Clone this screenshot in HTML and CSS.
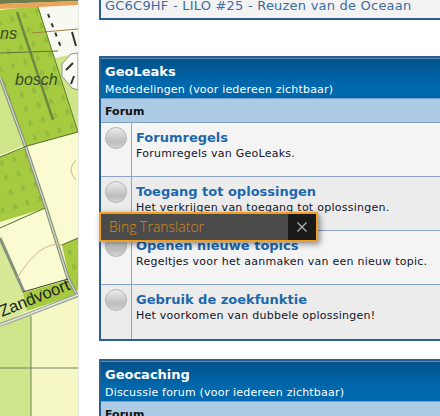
FILE: index.html
```html
<!DOCTYPE html>
<html lang="en">

<head>
    <meta charset="UTF-8">
    <title>GeoLeaks</title>
    <link rel="stylesheet" href="styles.css">
</head>

<body>
    <div class="page">
        <div class="map">
            <svg width="78" height="416" viewBox="0 0 78 416">
                <defs>
                    <pattern id="trees" width="13" height="15" patternUnits="userSpaceOnUse" patternTransform="rotate(-17)">
                        <rect width="13" height="15" fill="#a6cb41" />
                        <path d="M4 9 L6 4 L8 9 M6 4 V10" fill="none" stroke="#86ad38" stroke-width="0.8" />
                    </pattern>
                </defs>
                <rect width="78" height="416" fill="#f5f8c4" />
                <polygon points="0,238 24,292 27,311 0,325" fill="#d7e996" />
                <polygon points="0,325 31,314 31,416 0,416" fill="#cfe58c" />
                <polygon points="0,77 25,145 0,155" fill="#cfe58a" />
                <polygon points="55,58 78,53 78,132 70,134" fill="#cfe58a" />
                <polygon points="38,8 78,2 78,53 55,58" fill="#f8f9f0" />
                <polygon points="62,64 71,54 78,53 78,90 72,88 62,76" fill="#fbfbf4" stroke="#8b9484" />
                <polygon points="0,10 38,6 78,132 27,146 0,77" fill="url(#trees)" />
                <polygon points="0,157 27,147 46,208 0,222" fill="url(#trees)" />
                <polygon points="27,146 78,132 78,238 62,245" fill="#fafbd0" />
                <polygon points="0,228 45,208 68,278 23,291" fill="#fafbd0" />
                <polygon points="62,245 78,238 78,290 72,292" fill="url(#trees)" />
                <polygon points="23,293 68,280 75,295 27,311" fill="url(#trees)" />
                <polygon points="0,0 78,0 78,1 0,4" fill="#6f7d4a" />
                <polygon points="0,4 78,1 78,5 0,9" fill="#e8a55a" />
                <g fill="none">
                    <path d="M17 12 L53 120" stroke-width="2.5" stroke="#6f8a3e" />
                    <path d="M0 77 L25 145 L46 208 L68 278 L77 295" stroke-width="3.5" stroke="#858f7e" />
                    <path d="M0 77 L25 145 L46 208 L68 278 L77 295" stroke-width="1.2" stroke="#d5dac8" />
                    <path d="M0 238 L24 292" stroke-width="3" stroke="#858f7e" />
                    <path d="M27 146 L78 132 M0 157 L27 146 M0 228 L45 208 M62 245 L78 238" stroke-width="1" stroke="#4f6a32" />
                    <path d="M23 292 L68 279" stroke-width="1" stroke="#33402a" />
                    <path d="M0 325 L24 316 L78 295" stroke-width="4" stroke="#9aa298" />
                    <path d="M0 325 L24 316 L78 295" stroke-width="1.5" stroke="#e4e7da" />
                    <path d="M31 316 V416 M0 368 H78" stroke-width="1" stroke="#767f66" />
                    <path d="M32 33 L78 29" stroke-width="1" stroke="#a5813e" />
                    <path d="M0 53 L58 51" stroke-width="1" stroke="#5f7434" />
                    <path d="M38 7 L78 132" stroke-width="1" stroke="#5f7e34" />
                    <path d="M16 280 Q40 240 62 245 M76 160 Q66 170 76 180" stroke-width="1" stroke="#d3b78a" />
                    <path d="M48 14 L62 50" stroke-width="2" stroke="#33362d" stroke-dasharray="4 6" />
                    <path d="M66 70 L73 63 M74 76 L71 84 M72 32 L76 46" stroke-width="2" stroke="#33362d" />
                </g>
                <text class="map-label" x="0" y="39">ns</text>
                <text class="map-label" x="15" y="85">bosch</text>
                <text class="map-label map-road" transform="translate(2 317) rotate(-22)">Zandvoort</text>
            </svg>
        </div>

        <div class="content">
            <div class="card card-top">
                <a class="top-link">GC6C9HF - LILO #25 - Reuzen van de Oceaan</a>
            </div>

            <div class="card">
                <div class="card-head">
                    <div class="card-title">GeoLeaks</div>
                    <div class="card-sub">Mededelingen (voor iedereen zichtbaar)</div>
                </div>
                <div class="col-head">Forum</div>
                <div class="row">
                    <div class="row-icon"><span class="ball"></span></div>
                    <div class="row-body">
                        <a class="row-title">Forumregels</a>
                        <p class="row-desc">Forumregels van GeoLeaks.</p>
                    </div>
                </div>
                <div class="row alt">
                    <div class="row-icon"><span class="ball"></span></div>
                    <div class="row-body">
                        <a class="row-title">Toegang tot oplossingen</a>
                        <p class="row-desc">Het verkrijgen van toegang tot oplossingen.</p>
                    </div>
                </div>
                <div class="row">
                    <div class="row-icon"><span class="ball"></span></div>
                    <div class="row-body">
                        <a class="row-title">Openen nieuwe topics</a>
                        <p class="row-desc">Regeltjes voor het aanmaken van een nieuw topic.</p>
                    </div>
                </div>
                <div class="row alt">
                    <div class="row-icon"><span class="ball"></span></div>
                    <div class="row-body">
                        <a class="row-title">Gebruik de zoekfunktie</a>
                        <p class="row-desc">Het voorkomen van dubbele oplossingen!</p>
                    </div>
                </div>
            </div>

            <div class="card">
                <div class="card-head">
                    <div class="card-title">Geocaching</div>
                    <div class="card-sub">Discussie forum (voor iedereen zichtbaar)</div>
                </div>
                <div class="col-head">Forum</div>
            </div>
        </div>
    </div>

    <div class="bing">
        <div class="bing-label">Bing Translator</div>
        <div class="bing-close">
            <svg width="12" height="12" viewBox="0 0 12 12">
                <path d="M1.5 1.5 L10.5 10.5 M10.5 1.5 L1.5 10.5" stroke="#b5b5b5" stroke-width="1.2" fill="none" />
            </svg>
        </div>
    </div>
</body>

</html>
```

FILE: styles.css
```css
* {
    margin: 0;
    padding: 0;
    box-sizing: border-box;
}

body {
    background: #fff;
    font-family: "DejaVu Sans", sans-serif;
    overflow: hidden;
    height: 416px;
    position: relative;
}

.page {
    display: flex;
    height: 416px;
    overflow: hidden;
}

.map {
    width: 79px;
    flex: none;
    border-right: 1px solid #e8e8e4;
}

.map svg {
    display: block;
}

.map-label {
    font-family: "Liberation Sans", sans-serif;
    font-style: italic;
    font-size: 16px;
    fill: #3a4a26;
}

.map-road {
    font-style: normal;
    font-size: 16.5px;
    fill: #222;
}

.content {
    flex: none;
    width: 400px;
    margin-left: 20px;
}

.card {
    border: 2px solid #28608f;
    margin-bottom: 18px;
}

.card-top {
    border-top: 0;
    background: #f3f3f3;
    height: 20px;
    margin-bottom: 36px;
    padding-left: 4px;
}

.top-link {
    color: #3d6c9f;
    font-size: 13px;
    line-height: 11px;
    letter-spacing: 0.22px;
    display: block;
}

.card-head {
    height: 41px;
    padding: 4px 4px 0;
    background: linear-gradient(#02528a, #0068ad 65%);
    color: #fff;
    border-top: 1px solid #5d8db5;
    border-bottom: 1px solid #7ba3c8;
}

.card-title {
    font-size: 13px;
    font-weight: bold;
    line-height: 17px;
}

.card-sub {
    font-size: 11px;
    line-height: 15px;
    letter-spacing: 0.2px;
    margin-top: 2px;
}

.col-head {
    height: 24px;
    padding: 6px 4px 0;
    background: #aecbe6;
    border-bottom: 1px solid #7f9fc4;
    font-size: 11px;
    font-weight: bold;
    line-height: 14px;
    color: #111;
}

.row {
    display: flex;
    height: 54px;
    background: #f4f4f4;
    border-bottom: 1px solid #8ba4c8;
}

.row:last-child {
    border-bottom: 0;
}

.row.alt {
    background: #ececec;
}

.row-icon {
    width: 31px;
    flex: none;
    padding: 4px 0 0 4px;
    border-right: 1px solid #8ba4c8;
}

.ball {
    display: block;
    width: 22px;
    height: 22px;
    border-radius: 50%;
    border: 1px solid #b5b5b5;
    background: linear-gradient(#ececec, #bdbdbd 70%, #d4d4d4);
}

.row-body {
    padding: 6px 0 0 4px;
}

.row-title {
    display: block;
    color: #1c68ad;
    font-size: 13px;
    font-weight: bold;
    line-height: 17px;
}

.row-desc {
    font-size: 11px;
    line-height: 15px;
    letter-spacing: 0.25px;
    color: #14142a;
}

.bing {
    position: absolute;
    left: 99px;
    top: 212px;
    width: 219px;
    height: 30px;
    display: flex;
    border: 2px solid #f59e1b;
    background: #4a4a4a;
    box-shadow: 2px 2px 6px rgba(0, 0, 0, 0.45);
}

.bing-label {
    flex: 1;
    padding-left: 8px;
    font-family: "Open Sans", sans-serif;
    font-size: 14px;
    line-height: 26px;
    font-weight: 300;
    color: #d68a20;
}

.bing-close {
    width: 28px;
    background: #1a1a1a;
    display: flex;
    align-items: center;
    justify-content: center;
}
```
